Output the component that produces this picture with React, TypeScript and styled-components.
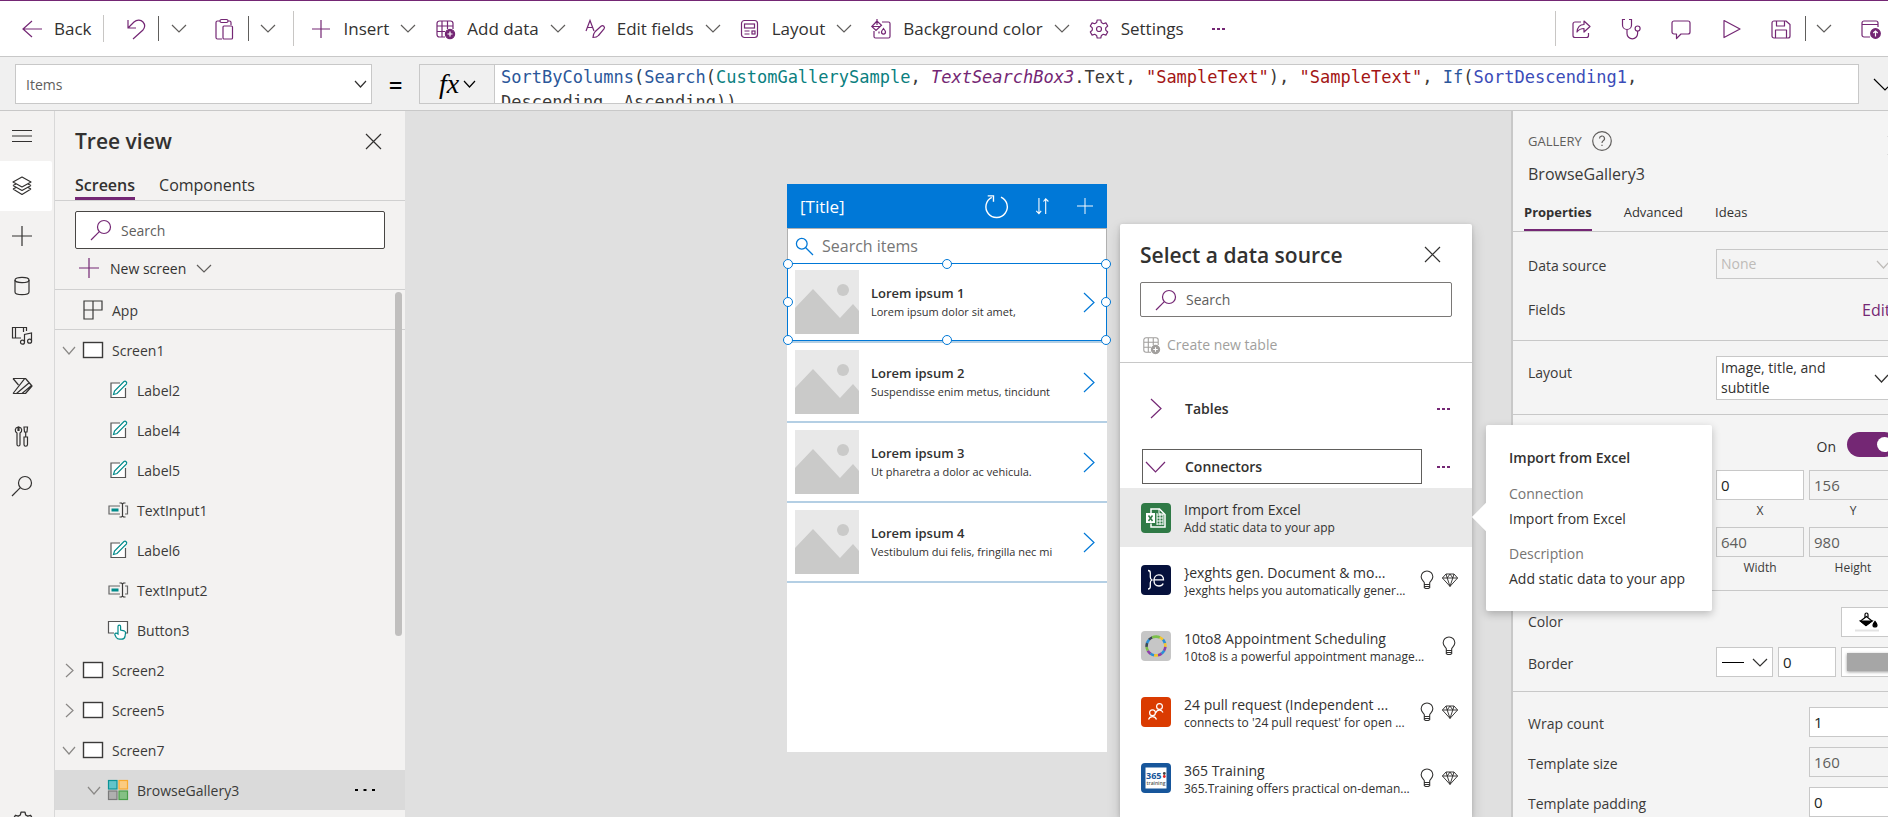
import React from "react";
import styled, { createGlobalStyle, css } from "styled-components";

const purple = "#742774";
const line = "#c8c8c8";
const blue = "#0078d7";

const GlobalStyle = createGlobalStyle`
  *, *::before, *::after { box-sizing: border-box; }
  body {
    margin: 0;
    overflow: hidden;
    font-family: "Open Sans", "Noto Sans", sans-serif;
    font-size: 14px;
    color: #323130;
  }
  button, input, select {
    font: inherit;
    color: inherit;
    margin: 0;
    padding: 0;
    border: 0;
    background: none;
    border-radius: 0;
  }
  h1, h2, h3, p, ul, dl, dd { margin: 0; padding: 0; }
  ul { list-style: none; }
`;

/* ---------- icons ---------- */

const Svg = styled.svg<{ $w?: number; $h?: number }>`
  flex: none;
  display: block;
  width: ${(p) => p.$w ?? 20}px;
  height: ${(p) => p.$h ?? p.$w ?? 20}px;
  fill: none;
  stroke: currentColor;
  stroke-width: 1.2;
  overflow: visible;
`;

type IconProps = { size?: number };

const Chevron = ({ w = 14, h = 7 }: { w?: number; h?: number }) => (
  <Svg $w={w} $h={h} viewBox={`0 0 ${w} ${h}`} aria-hidden>
    <path d={`M0 0 ${w / 2} ${h} ${w} 0`} />
  </Svg>
);
const ChevronRight = ({ w = 7, h = 13 }: { w?: number; h?: number }) => (
  <Svg $w={w} $h={h} viewBox={`0 0 ${w} ${h}`} aria-hidden>
    <path d={`M0 0 ${w} ${h / 2} 0 ${h}`} />
  </Svg>
);
const icon =
  (body: React.ReactNode, base = 20) =>
  ({ size = base }: IconProps) => (
    <Svg $w={size} viewBox="0 0 20 20" aria-hidden>
      {body}
    </Svg>
  );

const BackIcon = icon(<path d="M20 10H1M10 2 1 10l9 8" />);
const UndoIcon = icon(<path d="M2 1v8h8M2 9l6-6c3-2.800 7-2.300 9 0s2 5.500 0 8l-10 9" />);
const PasteIcon = icon(
  <>
    <path d="M8 20H3.500A1.500 1.500 0 0 1 2 18.500v-15A1.500 1.500 0 0 1 3.500 2H6m8 0h1.500A1.500 1.500 0 0 1 17 3.500V6" />
    <rect x="6" y="0.500" width="8" height="3" rx="1.500" />
    <rect x="9" y="7" width="9.500" height="13" rx="1" />
  </>
);
const PlusIcon = icon(<path d="M10 0v20M0 10h20" />);
const InsertIcon = icon(<path d="M9 1v18M0 10h18" />);
const AddDataIcon = icon(
  <>
    <path d="M10 18H4.500A2.500 2.500 0 0 1 2 15.500v-11A2.500 2.500 0 0 1 4.500 2h11A2.500 2.500 0 0 1 18 4.500V10M7 2v16M12.500 2v8M2 7h16M2 12.500h8" />
    <circle cx="15" cy="15" r="4.600" fill="currentColor" />
    <path d="M15 12.500v5M12.500 15h5" stroke="#fff" />
  </>
);
const EditFieldsIcon = icon(
  <>
    <path d="M1 12 5 1.500 9 12M2.500 8.500h5" />
    <path d="M8 18.500c0-3 .8-4.500 2-5.700l6-5.600c2-1.700 4.500.8 3 2.800l-5.500 6.500C12.300 18 10.500 18.500 8 18.500z" />
  </>
);
const LayoutIcon = icon(
  <>
    <rect x="1.500" y="1.500" width="16" height="17" rx="3" />
    <rect x="4.500" y="5" width="10" height="4" />
    <path d="M4.500 12h5M4.500 15h5" />
    <rect x="12" y="12" width="3" height="3" />
  </>
);
const FillIcon = icon(
  <>
    <path d="M11 3h6.500A1.500 1.500 0 0 1 19 4.500v13a1.500 1.500 0 0 1-1.500 1.500h-13A1.500 1.500 0 0 1 3 17.500V12" />
    <path d="M6 2 .8 7.500 5 11.500l5.500-5.300zM1 7.500h8.500M6 6V0" />
    <path d="M12.500 9.500c1.200 1.500 2 2.500 2 3.600a2 2 0 0 1-4 0c0-1.100.8-2.100 2-3.600zM8 12.500v2" />
  </>
);
const GearIcon = icon(
  <>
    <path d="M8.200 1h3.600l.6 2.600 1.900 1.100 2.600-.8 1.800 3.100-2 1.900v2.200l2 1.900-1.800 3.100-2.600-.8-1.900 1.100-.6 2.600H8.200l-.6-2.600-1.900-1.100-2.600.8L1.300 13l2-1.900V8.900l-2-1.900 1.800-3.100 2.600.8 1.900-1.100z" strokeLinejoin="round" />
    <circle cx="10" cy="10" r="2.500" />
  </>
);
const ShareIcon = icon(
  <path
    d="M10 3H4a2 2 0 0 0-2 2v11.500a2 2 0 0 0 2 2h11.500a2 2 0 0 0 2-2V14M6 13c.5-5 3-7.500 7-7.500V2l6 5.500-6 5.500V9.500c-3 0-5 .8-7 3.500z"
    strokeLinejoin="round"
  />
);
const HealthIcon = icon(
  <>
    <path d="M4 .5H1.500V6a4.500 4.500 0 0 0 9 0V.5H8M6 10.500v4a5.300 5.300 0 0 0 10.600 0V12" />
    <circle cx="16.600" cy="9.500" r="2.500" />
  </>
);
const CommentIcon = icon(
  <path d="M3 2h14a2 2 0 0 1 2 2v9a2 2 0 0 1-2 2h-7l-4.500 4.500V15H3a2 2 0 0 1-2-2V4a2 2 0 0 1 2-2z" strokeLinejoin="round" />
);
const PlayIcon = icon(<path d="M3 1.500 19 10 3 18.500z" strokeLinejoin="round" />);
const SaveIcon = icon(
  <path d="M3 2h12l4 3.500V17a2 2 0 0 1-2 2H3a2 2 0 0 1-2-2V4a2 2 0 0 1 2-2zm2.500 0v5h8V2M4.500 19v-8h11v8" strokeLinejoin="round" />
);
const PublishIcon = icon(
  <>
    <path d="M9 18H3a2 2 0 0 1-2-2V4a2 2 0 0 1 2-2h12a2 2 0 0 1 2 2v4M1 5.500h16" />
    <circle cx="14.500" cy="14.500" r="4.800" fill="currentColor" />
    <path d="M14.500 17.500v-5.500M12.300 14l2.200-2 2.200 2" stroke="#fff" />
  </>
);
const MenuIcon = icon(<path d="M0 4.500h20M0 10h20M0 15.500h20" />);
const LayersIcon = icon(
  <path d="M10 1 1 6l9 5 9-5zM1 9.500l9 5 9-5M1 13l9 5.500L19 13M1 9.500 4 8M19 9.500 16 8M1 13l3-1.500M19 13l-3-1.500" strokeLinejoin="round" />
);
const DataIcon = icon(
  <>
    <ellipse cx="10" cy="4" rx="7" ry="2.600" />
    <path d="M3 4v12c0 1.500 3 2.600 7 2.600s7-1.100 7-2.600V4" />
  </>
);
const MediaIcon = icon(
  <>
    <path d="M9 12H.5V1.500h14V5M3.500 2v10M11.500 2v4" />
    <path d="M12.500 16V8.500l7-1.500v8" />
    <circle cx="10.500" cy="16.200" r="2" />
    <circle cx="17.600" cy="15.200" r="2" />
  </>
);
const FlowIcon = icon(
  <path d="M1 2.500h12.500L20 10l-6.500 7.500H9M1 2.500 6.500 9M1 17.500h3.500L17.500 6.500M1 17.500 12.500 2.800M4.500 17.500H10l9.500-8" strokeLinejoin="round" />
);
const ToolsIcon = icon(
  <>
    <path d="M6 1a3.200 3.200 0 0 0-1 6v11.500a1.300 1.300 0 0 0 3 0V7a3.200 3.200 0 0 0-1-6v3.500H6z" />
    <path d="M12 1h3.500l-.5 5h-2.500zM13.700 6v5M12 11h3.500v7.500a1.500 1.500 0 0 1-3.500 0z" />
  </>
);
const SearchIcon = icon(
  <>
    <circle cx="13" cy="7" r="6.500" />
    <path d="M8.300 11.700 0 20" />
  </>
);
const CloseIcon = icon(<path d="M0 0 20 20M20 0 0 20" strokeWidth="1.600" />, 15);
const AppIcon = icon(<path d="M1 1h18v9H1zM10 1v18H1V1M1 10h18" />);
const ScreenIcon = icon(<rect x="0.500" y="2.500" width="19" height="15" fill="#fff" strokeWidth="1.400" />);
const LabelIcon = icon(
  <>
    <path d="M12 3H3v14.500h14.500V8" fill="#fff" stroke="#555" />
    <path d="m5.500 14.500 1-3.500L16 1.500c1.500-1 3.300.8 2.500 2.300L9 13.500z" stroke="#008b8b" fill="#fff" />
  </>
);
const TextInputIcon = icon(
  <>
    <path d="M12 6H1v8h11M17 6h2.500v8H17" stroke="#666" />
    <path d="M3.500 10h7" stroke="#008b8b" strokeWidth="3" />
    <path d="M11.500 3h2l1 1 1-1h2M14.500 4v12M11.500 17h2l1-1 1 1h2" />
  </>
);
const ButtonIcon = icon(
  <>
    <path d="M6 13H.5V1.500h19V13H17" fill="#fff" stroke="#555" />
    <path d="M10 12V6.500a1.300 1.300 0 0 1 2.600 0V10l3.500.8c1.200.4 1.600 1.200 1.400 2.400l-.5 3.300c-.4 1.700-1.600 2.700-3.400 2.700h-2c-1.700 0-2.600-.6-3.500-2l-1.300-2.700c0-1.500 1.700-1.800 3.200-.5z" stroke="#008b8b" fill="#fff" />
  </>
);
const GalleryIcon = icon(
  <>
    <rect x="0.500" y="0.500" width="8.500" height="8.500" fill="#62c4c9" stroke="#0a9396" />
    <rect x="11" y="0.500" width="8.500" height="8.500" fill="#fbcb80" stroke="#f7a92e" />
    <rect x="0.500" y="11" width="8.500" height="8.500" fill="#b0b0b0" stroke="#7a7a7a" />
    <rect x="11" y="11" width="8.500" height="8.500" fill="#84c084" stroke="#4a9e4a" />
  </>
);
const RefreshIcon = icon(<path d="M13 1.800A9.300 9.300 0 1 1 5 2M1.500.8h5v5" />);
const SortIcon = icon(<path d="M5.500 1v17.500M2.500 15.500l3 3 2.500-3M13 19V2M10.500 5 13 2l3 3" />);
const FindIcon = icon(
  <>
    <circle cx="6.800" cy="6.800" r="6.300" strokeWidth="1.500" />
    <path d="M11.500 11.500 20 20" strokeWidth="1.500" />
  </>
);
const BulbIcon = icon(
  <path d="M7 15v-2C6.500 11 3.500 10 3.500 6.500a6.500 6.500 0 0 1 13 0C16.500 10 13.500 11 13 13v2zM7 15v3.500l1.500 1h3l1.500-1V15M7 17.200h6" />
);
const GemIcon = icon(
  <path d="M5 2.500h10l4.500 5L10 18 .5 7.500zM.5 7.500h19M6.500 7.500 10 18l3.500-10.500L10 2.500zM5 2.500l1.500 5M15 2.500l-1.500 5" strokeLinejoin="round" />
);
const HelpIcon = icon(
  <>
    <circle cx="10" cy="10" r="9.300" />
    <path d="M7.500 7.500a2.500 2.500 0 1 1 3.700 2.200c-.9.500-1.200 1-1.200 2.300M10 13.700v1.400" />
  </>
);
const BucketIcon = icon(
  <>
    <path d="M6 6V2.500a1.500 1.500 0 0 1 3 0V5" />
    <path d="M7.500 4.500 1.500 9l5.500 4.500L13 9z" fill="#fff" />
    <path d="M1.500 9H13l-6 4.500z" fill="currentColor" />
    <path d="M16 9.500c1.500 1.800 2 2.500 2 3.500a2 2 0 0 1-4 0c0-1 .5-1.700 2-3.500z" fill="currentColor" />
    <path d="M-4 18.500h24" stroke="#e3e3e3" strokeWidth="2" />
  </>
);

const DotsSvg = styled.svg<{ $w: number }>`
  flex: none;
  display: block;
  width: ${(p) => p.$w}px;
  height: 4px;
  fill: currentColor;
`;
const Dots = ({ w = 13 }: { w?: number }) => (
  <DotsSvg $w={w} viewBox={`0 0 ${w} 4`} aria-hidden>
    <rect x="0" y="1" width="3" height="2" />
    <rect x={(w - 3) / 2} y="1" width="3" height="2" />
    <rect x={w - 3} y="1" width="3" height="2" />
  </DotsSvg>
);

/* ---------- shell ---------- */

const Shell = styled.div`
  display: flex;
  flex-direction: column;
  height: 100vh;
  overflow: hidden;
  border-top: 1px solid ${purple};
`;

const Toolbar = styled.header`
  flex: none;
  display: flex;
  justify-content: space-between;
  height: 56px;
  background: #fff;
  border-bottom: 1px solid ${line};
  overflow: hidden;
`;

const Commands = styled.div`
  display: flex;
  align-items: center;
  padding-left: 22px;
`;

const SideCommands = styled(Commands)`
  flex: none;
  width: 333px;
  padding-left: 0;
  gap: 30px;
`;

const Command = styled.button<{ $after?: number }>`
  flex: none;
  display: flex;
  align-items: center;
  gap: 12px;
  margin-right: ${(p) => p.$after ?? 20}px;
  color: ${purple};
  font-size: 17px;
  line-height: 26px;
`;
const CommandText = styled.span`
  color: #323130;
  white-space: nowrap;
`;
const Grey = styled.span`
  display: flex;
  color: #605e5c;
`;

const Divider = styled.span<{ $h: number; $before?: number; $after?: number; $dark?: boolean }>`
  flex: none;
  width: 1px;
  height: ${(p) => p.$h}px;
  margin: 0 ${(p) => p.$after ?? 0}px 0 ${(p) => p.$before ?? 0}px;
  background: ${(p) => (p.$dark ? "#605e5c" : "#c8c6c4")};
`;

const FormulaBar = styled.div`
  flex: none;
  display: flex;
  height: 54px;
  padding: 7px 0 0 15px;
  background: #f0f0f0;
  border-bottom: 1px solid ${line};
  overflow: hidden;
`;

const SelectWrap = styled.div<{ $w?: string; $h: number; $disabled?: boolean }>`
  position: relative;
  flex: none;
  width: ${(p) => p.$w ?? "auto"};
  height: ${(p) => p.$h}px;
  background: ${(p) => (p.$disabled ? "transparent" : "#fff")};
  border: 1px solid ${line};
  color: ${(p) => (p.$disabled ? "#bebbb8" : "inherit")};
`;
const Select = styled.select`
  appearance: none;
  width: 100%;
  height: 100%;
  opacity: 1;
  outline: none;
`;
const PropertySelect = styled(Select)`
  padding: 0 34px 0 10px;
  font-size: 14px;
  color: #605e5c;
`;
const PanelSelect = styled(Select)`
  padding: 0 24px 0 4px;
  font-size: 14px;
  line-height: 20px;
  white-space: normal;
`;
const SelectArrow = styled.span<{ $right: number }>`
  position: absolute;
  top: 0;
  bottom: 0;
  right: ${(p) => p.$right}px;
  display: flex;
  align-items: center;
  pointer-events: none;
`;

const Equals = styled.span`
  flex: none;
  width: 47px;
  text-align: center;
  font-size: 24px;
  font-weight: 600;
  line-height: 42px;
  color: #000;
`;

const FxButton = styled.button`
  flex: none;
  display: flex;
  align-items: center;
  justify-content: center;
  gap: 5px;
  width: 76px;
  height: 40px;
  border: 1px solid ${line};
  color: #000;
  font-family: "Liberation Serif", serif;
  font-size: 28px;
  font-style: italic;
`;

const Formula = styled.div`
  flex: 1;
  height: 40px;
  padding-left: 6px;
  background: #fff;
  border: 1px solid ${line};
  border-left: 0;
  overflow: hidden;
  font-family: "DejaVu Sans Mono", monospace;
  font-size: 17px;
  line-height: 25px;
  white-space: pre;
  color: #3b3a39;
`;
const Token = styled.span<{ $kind: "fn" | "src" | "ctl" | "str" | "var" }>`
  color: ${(p) => ({ fn: "#2b579a", src: "#0b7f7f", ctl: "#742774", str: "#a31515", var: "#3b4cb8" }[p.$kind])};
  font-style: ${(p) => (p.$kind === "ctl" ? "italic" : "normal")};
`;
const ExpandButton = styled.button`
  flex: none;
  width: 29px;
  padding-left: 15px;
  height: 40px;
  color: #000;
  overflow: hidden;
`;

const Main = styled.main`
  flex: 1;
  display: flex;
  min-height: 0;
`;

/* ---------- rail ---------- */

const Rail = styled.nav`
  flex: none;
  display: flex;
  flex-direction: column;
  width: 55px;
  background: #f3f2f1;
  border-right: 1px solid #d8d8d8;
  overflow: hidden;
`;
const RailButton = styled.button<{ $active?: boolean }>`
  flex: none;
  display: flex;
  align-items: center;
  width: 52px;
  height: 50px;
  padding-left: 12px;
  border-radius: 0 2px 2px 0;
  background: ${(p) => (p.$active ? "#fff" : "transparent")};
`;
const RailFoot = styled.div`
  flex: none;
  height: 6px;
  margin-top: auto;
`;

/* ---------- tree ---------- */

const Tree = styled.aside`
  position: relative;
  flex: none;
  display: flex;
  flex-direction: column;
  width: 350px;
  background: #f3f2f1;
  overflow: hidden;
`;
const TreeHead = styled.div`
  flex: none;
  display: flex;
  align-items: center;
  justify-content: space-between;
  height: 60px;
  padding: 0 24px 0 20px;
`;
const TreeTitle = styled.h1`
  font-size: 21px;
  font-weight: 600;
  line-height: 28px;
`;
const TreeTabs = styled.div`
  flex: none;
  display: flex;
  gap: 24px;
  height: 30px;
  padding-left: 20px;
  border-bottom: 1px solid #d0d0d0;
`;
const TreeTab = styled.button<{ $active?: boolean }>`
  display: flex;
  font-size: 16px;
  line-height: 28px;
  font-weight: ${(p) => (p.$active ? 600 : 400)};
  border-bottom: 3px solid ${(p) => (p.$active ? purple : "transparent")};
`;
const SearchField = styled.label<{ $h: number; $border: string }>`
  flex: none;
  display: flex;
  align-items: center;
  gap: 10px;
  height: ${(p) => p.$h}px;
  padding-left: 15px;
  background: #fff;
  border: 1px solid ${(p) => p.$border};
  border-radius: 2px;
  color: ${purple};
`;
const SearchInput = styled.input`
  flex: 1;
  min-width: 0;
  height: 100%;
  outline: none;
  font-size: 14px;
  color: #323130;
  &::placeholder { color: #605e5c; opacity: 1; }
`;
const TreeSearch = styled.div`
  flex: none;
  padding: 10px 20px 0;
`;
const NewScreen = styled.button`
  flex: none;
  display: flex;
  align-items: center;
  gap: 11px;
  height: 41px;
  padding: 0 0 2px 24px;
  border-bottom: 1px solid #d0d0d0;
`;
const Purple = styled.span`
  display: flex;
  color: ${purple};
`;
const TreeList = styled.ul`
  flex: none;
`;
const TreeItem = styled.li<{ $selected?: boolean; $ruled?: boolean }>`
  display: flex;
  align-items: center;
  height: 40px;
  padding-right: 30px;
  background: ${(p) => (p.$selected ? "#dadada" : "transparent")};
  border-bottom: ${(p) => (p.$ruled ? "1px solid #d0d0d0" : "0")};
`;
const TreeTwisty = styled.span<{ $depth: number }>`
  flex: none;
  display: flex;
  justify-content: center;
  width: ${(p) => 28 + p.$depth * 25}px;
  padding-left: ${(p) => p.$depth * 25}px;
  color: #8a8886;
`;
const TreeButton = styled.button`
  flex: 1;
  display: flex;
  align-items: center;
  gap: 9px;
  color: #3b3a39;
  line-height: 20px;
`;
const TreeName = styled.span`
  padding-top: 2px;
`;
const TreeScroll = styled.span`
  position: absolute;
  top: 181px;
  right: 3px;
  width: 7px;
  height: 344px;
  border-radius: 4px;
  background: #c0bfbe;
`;

/* ---------- canvas ---------- */

const Canvas = styled.section`
  position: relative;
  z-index: 1;
  flex: 1;
  min-width: 0;
  display: flex;
  justify-content: center;
  align-items: flex-start;
  padding: 73px 22px 0 0;
  background: #e0e0e0;
`;
const Phone = styled.div`
  display: flex;
  flex-direction: column;
  width: 320px;
  min-height: 568px;
  background: #fff;
`;
const PhoneHead = styled.div`
  display: flex;
  align-items: center;
  justify-content: space-between;
  height: 44px;
  padding: 0 14px 0 13px;
  background: ${blue};
  color: #fff;
`;
const PhoneTitle = styled.h2`
  font-size: 17px;
  font-weight: 400;
`;
const PhoneActions = styled.div`
  display: flex;
  align-items: center;
  gap: 25px;
`;
const BareButton = styled.button`
  display: flex;
  align-items: center;
`;
const PhoneSearch = styled.label`
  display: flex;
  align-items: center;
  gap: 9px;
  height: 35px;
  padding-left: 8px;
  border: solid #b0b0b0;
  border-width: 1px 1px 0;
  color: ${blue};
`;
const PhoneSearchInput = styled(SearchInput)`
  font-size: 16px;
  &::placeholder { color: #767676; }
`;
const Card = styled.li`
  position: relative;
  display: flex;
  align-items: center;
  height: 80px;
  padding: 0 13px 0 8px;
  border-bottom: 2px solid #b4cfe4;
`;
const CardText = styled.div`
  flex: 1;
  padding-left: 12px;
`;
const CardTitle = styled.h3`
  font-size: 13px;
  font-weight: 600;
  line-height: 19px;
`;
const CardSub = styled.p`
  font-size: 11px;
  line-height: 18px;
  white-space: nowrap;
`;
const Accent = styled.span`
  display: flex;
  color: ${blue};
`;
const Picture = styled.svg`
  flex: none;
  display: block;
  width: 64px;
  height: 64px;
`;
const Selection = styled.div`
  position: absolute;
  inset: 0;
  border: 1px solid ${blue};
`;
const Handle = styled.span<{ $x: number; $y: number }>`
  position: absolute;
  left: ${(p) => p.$x}%;
  top: ${(p) => p.$y}%;
  width: 10px;
  height: 10px;
  margin: -5px;
  border: 1px solid ${blue};
  border-radius: 50%;
  background: #fff;
`;

/* ---------- data source flyout ---------- */

const Flyout = styled.section`
  position: absolute;
  top: 113px;
  right: 39px;
  bottom: 0;
  display: flex;
  flex-direction: column;
  width: 352px;
  background: #fff;
  border-radius: 2px 2px 0 0;
  box-shadow: 0 6px 14px rgba(0, 0, 0, 0.18), 0 1px 4px rgba(0, 0, 0, 0.14);
`;
const FlyoutHead = styled.div`
  flex: none;
  display: flex;
  align-items: center;
  justify-content: space-between;
  height: 58px;
  padding: 3px 32px 0 20px;
`;
const FlyoutTitle = styled.h2`
  font-size: 21px;
  font-weight: 600;
  line-height: 28px;
`;
const FlyoutSearch = styled.div`
  flex: none;
  padding: 0 20px;
`;
const CreateTable = styled.button`
  flex: none;
  display: flex;
  align-items: center;
  gap: 7px;
  height: 46px;
  padding: 10px 0 0 22px;
  border-bottom: 1px solid ${line};
  color: #a19f9d;
`;
const Groups = styled.div`
  flex: none;
  padding: 28px 22px 4px 22px;
`;
const Group = styled.div`
  display: flex;
  align-items: center;
  justify-content: space-between;
  height: 35px;
  color: ${purple};
  & + & { margin-top: 23px; }
`;
const GroupButton = styled.button<{ $focused?: boolean }>`
  display: flex;
  align-items: center;
  width: 280px;
  height: 35px;
  border: 1px solid ${(p) => (p.$focused ? "#605e5c" : "transparent")};
`;
const GroupChevron = styled.span`
  display: flex;
  justify-content: center;
  width: 25px;
  margin-right: 17px;
`;
const GroupName = styled.span`
  font-size: 14px;
  font-weight: 600;
  color: #323130;
`;
const Connectors = styled.ul`
  flex: 1;
  min-height: 0;
  overflow: hidden;
`;
const Connector = styled.li<{ $hover?: boolean }>`
  display: flex;
  align-items: center;
  height: ${(p) => (p.$hover ? 59 : 66)}px;
  padding: 0 14px 0 21px;
  background: ${(p) => (p.$hover ? "#e9e9e9" : "transparent")};
`;
const Logo = styled.svg`
  flex: none;
  display: block;
  width: 30px;
  height: 30px;
`;
const ConnectorText = styled.button`
  flex: 1;
  min-width: 0;
  padding: 2px 0 0 13px;
  text-align: left;
  white-space: nowrap;
`;
const ConnectorName = styled.span`
  display: block;
  font-size: 14px;
  line-height: 18px;
`;
const ConnectorSub = styled.span`
  display: block;
  font-size: 12px;
  line-height: 17px;
`;
const Badges = styled.span`
  flex: none;
  display: flex;
  align-items: center;
  gap: 6px;
`;

const Callout = styled.div`
  position: absolute;
  top: 201px;
  left: calc(100% + 14px);
  width: 226px;
  padding: 22px 0 20px 23px;
  background: #fff;
  border-radius: 2px;
  box-shadow: 0 3px 8px rgba(0, 0, 0, 0.24);
  white-space: nowrap;
  &::before {
    content: "";
    position: absolute;
    left: -10px;
    top: 82px;
    width: 20px;
    height: 20px;
    background: #fff;
    transform: rotate(45deg);
  }
`;
const CalloutTitle = styled.h3`
  font-size: 14px;
  font-weight: 600;
  line-height: 22px;
  margin-bottom: 12px;
`;
const CalloutTerm = styled.dt`
  font-size: 14px;
  line-height: 25px;
  color: #767472;
`;
const CalloutValue = styled.dd`
  font-size: 14px;
  line-height: 25px;
  &:not(:last-child) { margin-bottom: 10px; }
`;

/* ---------- properties ---------- */

const Properties = styled.aside`
  flex: none;
  width: 377px;
  background: #f4f4f4;
  border-left: 2px solid ${line};
  overflow: hidden;
`;
const PropertiesBody = styled.div`
  width: 399px;
`;
const PanelHead = styled.div`
  display: flex;
  justify-content: space-between;
  height: 85px;
  padding: 19px 13px 0 15px;
  color: #605e5c;
`;
const PanelKind = styled.div`
  display: flex;
  align-items: center;
  gap: 10px;
  height: 21px;
  font-size: 13px;
`;
const PanelName = styled.h2`
  margin-top: 10px;
  font-size: 16px;
  font-weight: 400;
  line-height: 26px;
  color: #3b3a39;
`;
const PanelTabs = styled.div`
  display: flex;
  gap: 32px;
  height: 36px;
  padding-left: 11px;
  border-bottom: 1px solid ${line};
`;
const PanelTab = styled.button<{ $active?: boolean }>`
  display: flex;
  font-size: 13px;
  line-height: 32px;
  font-weight: ${(p) => (p.$active ? 700 : 400)};
  border-bottom: 2px solid ${(p) => (p.$active ? purple : "transparent")};
`;
const Section = styled.div<{ $pad: string }>`
  display: flex;
  flex-direction: column;
  padding: ${(p) => p.$pad};
  border-bottom: 1px solid ${line};
`;
const Row = styled.div<{ $h?: number; $top?: boolean }>`
  display: flex;
  justify-content: flex-end;
  align-items: ${(p) => (p.$top ? "flex-start" : "center")};
  min-height: ${(p) => p.$h ?? 40}px;
  & > label { padding-top: ${(p) => (p.$top ? 7 : 3)}px; }
`;
const Name = styled.label`
  flex: 1;
  font-size: 14px;
  line-height: 20px;
  color: #3b3a39;
`;
const EditLink = styled.a`
  width: 35px;
  font-size: 16px;
  color: ${purple};
  text-decoration: none;
`;
const Fields = styled.div`
  display: flex;
  justify-content: flex-end;
  gap: 5px;
  & + & { margin-top: 5px; }
`;
const Field = styled.div`
  display: flex;
  flex-direction: column;
  width: 88px;
`;
const FieldName = styled.label`
  text-align: center;
  font-size: 12px;
  line-height: 22px;
  color: #3b3a39;
`;
const NumberInput = styled.input<{ $w?: number }>`
  width: ${(p) => p.$w ?? 88}px;
  height: 30px;
  padding-left: 4px;
  font-size: 15px;
  background: ${(p) => (p.readOnly ? "transparent" : "#fff")};
  color: ${(p) => (p.readOnly ? "#605e5c" : "#201f1e")};
  border: 1px solid ${line};
`;
const Toggle = styled.input`
  appearance: none;
  position: relative;
  width: 50px;
  height: 25px;
  margin-left: 11px;
  border-radius: 13px;
  background: ${purple};
  &::after {
    content: "";
    position: absolute;
    top: 5px;
    right: 5px;
    width: 15px;
    height: 15px;
    border-radius: 50%;
    background: #fff;
  }
`;
const swatchBox = css`
  width: 56px;
  height: 30px;
  border: 1px solid ${line};
  background: #fff;
`;
const ColorButton = styled.button`
  ${swatchBox}
  display: flex;
  align-items: center;
  justify-content: center;
  color: #000;
`;
const BorderSwatch = styled.button`
  ${swatchBox}
  padding: 5px;
  &::before {
    content: "";
    display: block;
    height: 18px;
    background: #a6a6a6;
    box-shadow: 0 1px 3px rgba(0, 0, 0, 0.4);
  }
`;
const LineSample = styled.span`
  position: absolute;
  left: 5px;
  top: 14px;
  width: 22px;
  height: 1px;
  background: #000;
  pointer-events: none;
`;
const BareCommand = styled(BareButton)`
  flex: none;
  color: ${purple};
`;
const RailGear = styled(BareButton)`
  padding-left: 12px;
`;
const MoreButton = styled(BareButton)`
  color: #000;
`;
const PanelCollapse = styled(BareButton)`
  height: 30px;
`;

/* ---------- data ---------- */

type Node = {
  name: string;
  depth: number;
  Icon: React.FC<IconProps>;
  open?: boolean;
  ruled?: boolean;
  selected?: boolean;
};

const nodes: Node[] = [
  { name: "App", depth: 0, Icon: AppIcon, ruled: true },
  { name: "Screen1", depth: 0, Icon: ScreenIcon, open: true },
  { name: "Label2", depth: 1, Icon: LabelIcon },
  { name: "Label4", depth: 1, Icon: LabelIcon },
  { name: "Label5", depth: 1, Icon: LabelIcon },
  { name: "TextInput1", depth: 1, Icon: TextInputIcon },
  { name: "Label6", depth: 1, Icon: LabelIcon },
  { name: "TextInput2", depth: 1, Icon: TextInputIcon },
  { name: "Button3", depth: 1, Icon: ButtonIcon },
  { name: "Screen2", depth: 0, Icon: ScreenIcon, open: false },
  { name: "Screen5", depth: 0, Icon: ScreenIcon, open: false },
  { name: "Screen7", depth: 0, Icon: ScreenIcon, open: true },
  { name: "BrowseGallery3", depth: 1, Icon: GalleryIcon, open: true, selected: true },
];

const rail: { name: string; Icon: React.FC<IconProps> }[] = [
  { name: "Tree view", Icon: LayersIcon },
  { name: "Insert", Icon: PlusIcon },
  { name: "Data", Icon: DataIcon },
  { name: "Media", Icon: MediaIcon },
  { name: "Power Automate", Icon: FlowIcon },
  { name: "Advanced tools", Icon: ToolsIcon },
  { name: "Search", Icon: SearchIcon },
];

const commands: { name: string; Icon: React.FC<IconProps> }[] = [
  { name: "Insert", Icon: InsertIcon },
  { name: "Add data", Icon: AddDataIcon },
  { name: "Edit fields", Icon: EditFieldsIcon },
  { name: "Layout", Icon: LayoutIcon },
  { name: "Background color", Icon: FillIcon },
];

const cards = [
  ["Lorem ipsum 1", "Lorem ipsum dolor sit amet,"],
  ["Lorem ipsum 2", "Suspendisse enim metus, tincidunt"],
  ["Lorem ipsum 3", "Ut pharetra a dolor ac vehicula."],
  ["Lorem ipsum 4", "Vestibulum dui felis, fringilla nec mi"],
];

const ring = ["#7cc04b", "#f2c530", "#2b8fd6", "#f2c530", "#8e3fa8", "#2b8fd6", "#8e3fa8", "#f2c530", "#2b8fd6", "#8e3fa8", "#7cc04b", "#3c4a55", "#2b8fd6", "#3c4a55", "#7cc04b"];

const ExcelLogo = (
  <>
    <rect width="30" height="30" rx="4" fill="#2f7a46" />
    <path d="M10 10V6h8.500l5.500 5.500V24H10v-3.500" fill="none" stroke="#fff" strokeWidth="1.500" />
    <path d="M16 12h6M16 15h6M16 18h6M16 21h6M16 10v12M19 10v12M22 11v11M18 6v5h5" fill="none" stroke="#fff" />
    <rect x="5" y="10" width="9" height="10" fill="#fff" />
    <path d="m7.500 12.500 4 5.500M11.500 12.500l-4 5.500" stroke="#2f7a46" strokeWidth="1.500" />
  </>
);
const ExghtsLogo = (
  <>
    <rect width="30" height="30" rx="4" fill="#06113c" />
    <path d="M7 5.500c2 0 2.300 1 2.300 2.500v4c0 1.800.4 2.600 1.700 3-1.300.4-1.700 1.200-1.700 3v3.500c0 1.500-.3 2.500-2.300 2.500M13 14.800h9.500c0-3-2-5-4.700-5S13 12.200 13 15.500s2 5.500 5 5.500c2 0 3.500-.8 4.200-2.500" fill="none" stroke="#fff" strokeWidth="1.300" />
  </>
);
const TenTo8Logo = (
  <>
    <rect width="30" height="30" rx="4" fill="#c6c6c6" />
    {ring.map((color, i) => (
      <path key={i} d="M15 5.600a9.400 9.400 0 0 1 4 .9" fill="none" stroke={color} strokeWidth="2.600" transform={`rotate(${i * 24} 15 15)`} />
    ))}
  </>
);
const PullLogo = (
  <>
    <rect width="30" height="30" rx="4" fill="#da3b01" />
    <g fill="none" stroke="#fff" strokeWidth="1.200">
      <circle cx="18.500" cy="9.500" r="2.900" />
      <path d="M14.700 16a3.900 3.900 0 0 1 7.300-.5" />
      <circle cx="11.500" cy="15.700" r="2.900" />
      <path d="M7.500 22.500a4.200 4.200 0 0 1 8 0" />
    </g>
  </>
);
const TrainingLogo = (
  <>
    <rect width="30" height="30" rx="4" fill="#17569b" />
    <rect x="4.500" y="4.500" width="21" height="21" fill="#fff" />
    <text x="5" y="16" fontSize="9" fontWeight="700" fill="#17569b" stroke="none">365</text>
    <circle cx="23.300" cy="10.500" r="1.400" fill="#444" />
    <circle cx="23.300" cy="13.500" r="1.400" fill="#d22" />
    <text x="5.500" y="21.500" fontSize="5" fontWeight="600" fill="#555" stroke="none">training</text>
  </>
);

const connectors: { logo: React.ReactNode; name: string; sub: string; bulb?: boolean; gem?: boolean; hover?: boolean }[] = [
  { logo: ExcelLogo, name: "Import from Excel", sub: "Add static data to your app", hover: true },
  { logo: ExghtsLogo, name: "}exghts gen. Document & mo...", sub: "}exghts helps you automatically gener...", bulb: true, gem: true },
  { logo: TenTo8Logo, name: "10to8 Appointment Scheduling", sub: "10to8 is a powerful appointment manage...", bulb: true },
  { logo: PullLogo, name: "24 pull request (Independent ...", sub: "connects to '24 pull request' for open ...", bulb: true, gem: true },
  { logo: TrainingLogo, name: "365 Training", sub: "365.Training offers practical on-deman...", bulb: true, gem: true },
];

const handles = [[0, 0], [50, 0], [100, 0], [0, 50], [100, 50], [0, 100], [50, 100], [100, 100]];

/* ---------- page ---------- */

export default function App() {
  return (
    <>
      <GlobalStyle />
      <Shell>
        <Toolbar>
          <Commands>
            <Command $after={11}><BackIcon /><CommandText>Back</CommandText></Command>
            <Divider $h={27} $after={22} />
            <Command $after={12} aria-label="Undo"><UndoIcon /></Command>
            <Divider $h={25} $dark $after={13} />
            <Command $after={28} aria-label="Undo options"><Grey><Chevron /></Grey></Command>
            <Command $after={14} aria-label="Paste"><PasteIcon /></Command>
            <Divider $h={25} $dark $after={12} />
            <Command $after={18} aria-label="Paste options"><Grey><Chevron /></Grey></Command>
            <Divider $h={35} $after={18} />
            {commands.map(({ name, Icon }) => (
              <Command key={name}><Icon /><CommandText>{name}</CommandText><Grey><Chevron /></Grey></Command>
            ))}
            <Command $after={28}><GearIcon /><CommandText>Settings</CommandText></Command>
            <Command aria-label="More commands"><Dots /></Command>
          </Commands>
          <SideCommands>
            <Divider $h={35} $after={-15} />
            <BareCommand aria-label="Share"><ShareIcon /></BareCommand>
            <BareCommand aria-label="App checker"><HealthIcon /></BareCommand>
            <BareCommand aria-label="Comments"><CommentIcon /></BareCommand>
            <BareCommand aria-label="Preview"><PlayIcon /></BareCommand>
            <BareCommand aria-label="Save"><SaveIcon /></BareCommand>
            <Divider $h={25} $dark $before={-16} $after={-19} />
            <BareCommand aria-label="Save options"><Grey><Chevron /></Grey></BareCommand>
            <BareCommand aria-label="Publish"><PublishIcon /></BareCommand>
          </SideCommands>
        </Toolbar>

        <FormulaBar>
          <SelectWrap $w="357px" $h={40}>
            <PropertySelect aria-label="Property"><option>Items</option></PropertySelect>
            <SelectArrow $right={5}><Chevron w={11} h={6} /></SelectArrow>
          </SelectWrap>
          <Equals>=</Equals>
          <FxButton aria-label="Function"><span>fx</span><Chevron w={11} h={6} /></FxButton>
          <Formula role="textbox" aria-label="Formula">
            <Token $kind="fn">SortByColumns</Token>(<Token $kind="fn">Search</Token>(
            <Token $kind="src">CustomGallerySample</Token>, <Token $kind="ctl">TextSearchBox3</Token>.Text,{" "}
            <Token $kind="str">"SampleText"</Token>), <Token $kind="str">"SampleText"</Token>,{" "}
            <Token $kind="fn">If</Token>(<Token $kind="var">SortDescending1</Token>,{"\n"}Descending, Ascending))
          </Formula>
          <ExpandButton aria-label="Expand formula bar"><Chevron w={22} h={11} /></ExpandButton>
        </FormulaBar>

        <Main>
          <Rail aria-label="Authoring">
            <RailButton aria-label="Menu"><MenuIcon /></RailButton>
            {rail.map(({ name, Icon }, i) => (
              <RailButton key={name} $active={i === 0} aria-label={name}><Icon /></RailButton>
            ))}
            <RailFoot>
              <RailGear aria-label="Settings"><GearIcon size={22} /></RailGear>
            </RailFoot>
          </Rail>

          <Tree>
            <TreeHead>
              <TreeTitle>Tree view</TreeTitle>
              <BareButton aria-label="Close tree view"><CloseIcon /></BareButton>
            </TreeHead>
            <TreeTabs>
              <TreeTab $active>Screens</TreeTab>
              <TreeTab>Components</TreeTab>
            </TreeTabs>
            <TreeSearch>
              <SearchField $h={38} $border="#484644">
                <SearchIcon />
                <SearchInput placeholder="Search" aria-label="Search screens" />
              </SearchField>
            </TreeSearch>
            <NewScreen>
              <Purple><PlusIcon /></Purple>New screen<Grey><Chevron /></Grey>
            </NewScreen>
            <TreeList>
              {nodes.map(({ name, depth, Icon, open, ruled, selected }) => (
                <TreeItem key={name} $ruled={ruled} $selected={selected}>
                  <TreeTwisty $depth={depth}>
                    {open === true && <Chevron w={12} h={7} />}
                    {open === false && <ChevronRight />}
                  </TreeTwisty>
                  <TreeButton><Icon /><TreeName>{name}</TreeName></TreeButton>
                  {selected && <MoreButton aria-label="More"><Dots w={20} /></MoreButton>}
                </TreeItem>
              ))}
            </TreeList>
            <TreeScroll />
          </Tree>

          <Canvas>
            <Phone>
              <PhoneHead>
                <PhoneTitle>[Title]</PhoneTitle>
                <PhoneActions>
                  <BareButton aria-label="Refresh"><RefreshIcon size={23} /></BareButton>
                  <BareButton aria-label="Sort"><SortIcon size={18} /></BareButton>
                  <BareButton aria-label="New"><PlusIcon size={16} /></BareButton>
                </PhoneActions>
              </PhoneHead>
              <PhoneSearch>
                <FindIcon size={17} />
                <PhoneSearchInput placeholder="Search items" aria-label="Search items" />
              </PhoneSearch>
              <ul>
                {cards.map(([title, sub], i) => (
                  <Card key={title}>
                    <Picture viewBox="0 0 64 64" aria-hidden>
                      <rect width="64" height="64" fill="#e8e8e8" />
                      <path d="M0 38 18 19l27 29 13-14 6 7v23H0z" fill="#cacac9" />
                      <circle cx="48" cy="20" r="6" fill="#cacac9" />
                    </Picture>
                    <CardText>
                      <CardTitle>{title}</CardTitle>
                      <CardSub>{sub}</CardSub>
                    </CardText>
                    <Accent><ChevronRight w={10} h={19} /></Accent>
                    {i === 0 && (
                      <Selection>
                        {handles.map(([x, y]) => <Handle key={`${x}-${y}`} $x={x} $y={y} />)}
                      </Selection>
                    )}
                  </Card>
                ))}
              </ul>
            </Phone>

            <Flyout>
              <FlyoutHead>
                <FlyoutTitle>Select a data source</FlyoutTitle>
                <BareButton aria-label="Close"><CloseIcon /></BareButton>
              </FlyoutHead>
              <FlyoutSearch>
                <SearchField $h={35} $border="#7a7876">
                  <SearchIcon />
                  <SearchInput placeholder="Search" aria-label="Search data sources" />
                </SearchField>
              </FlyoutSearch>
              <CreateTable><AddDataIcon size={18} />Create new table</CreateTable>
              <Groups>
                <Group>
                  <GroupButton>
                    <GroupChevron><ChevronRight w={10} h={19} /></GroupChevron>
                    <GroupName>Tables</GroupName>
                  </GroupButton>
                  <BareButton aria-label="Tables options"><Dots /></BareButton>
                </Group>
                <Group>
                  <GroupButton $focused>
                    <GroupChevron><Chevron w={19} h={10} /></GroupChevron>
                    <GroupName>Connectors</GroupName>
                  </GroupButton>
                  <BareButton aria-label="Connectors options"><Dots /></BareButton>
                </Group>
              </Groups>
              <Connectors>
                {connectors.map((c) => (
                  <Connector key={c.name} $hover={c.hover}>
                    <Logo viewBox="0 0 30 30" aria-hidden>{c.logo}</Logo>
                    <ConnectorText>
                      <ConnectorName>{c.name}</ConnectorName>
                      <ConnectorSub>{c.sub}</ConnectorSub>
                    </ConnectorText>
                    <Badges>
                      {c.bulb && <BulbIcon size={18} />}
                      {c.gem && <GemIcon size={16} />}
                    </Badges>
                  </Connector>
                ))}
              </Connectors>
              <Callout role="tooltip">
                <CalloutTitle>Import from Excel</CalloutTitle>
                <dl>
                  <CalloutTerm>Connection</CalloutTerm>
                  <CalloutValue>Import from Excel</CalloutValue>
                  <CalloutTerm>Description</CalloutTerm>
                  <CalloutValue>Add static data to your app</CalloutValue>
                </dl>
              </Callout>
            </Flyout>
          </Canvas>

          <Properties>
            <PropertiesBody>
              <PanelHead>
                <div>
                  <PanelKind>GALLERY<HelpIcon /></PanelKind>
                  <PanelName>BrowseGallery3</PanelName>
                </div>
                <PanelCollapse aria-label="Collapse"><ChevronRight w={11} h={19} /></PanelCollapse>
              </PanelHead>
              <PanelTabs>
                <PanelTab $active>Properties</PanelTab>
                <PanelTab>Advanced</PanelTab>
                <PanelTab>Ideas</PanelTab>
              </PanelTabs>
              <Section $pad="9px 15px 7px">
                <Row $h={46}>
                  <Name htmlFor="data-source">Data source</Name>
                  <SelectWrap $w="181px" $h={30} $disabled>
                    <PanelSelect id="data-source" disabled><option>None</option></PanelSelect>
                    <SelectArrow $right={6}><Chevron w={13} h={7} /></SelectArrow>
                  </SelectWrap>
                </Row>
                <Row $h={46}>
                  <Name as="span">Fields</Name>
                  <EditLink href="#fields">Edit</EditLink>
                </Row>
              </Section>
              <Section $pad="15px 15px 14px">
                <Row $h={44} $top>
                  <Name htmlFor="layout">Layout</Name>
                  <SelectWrap $w="181px" $h={44}>
                    <PanelSelect id="layout"><option>Image, title, and subtitle</option></PanelSelect>
                    <SelectArrow $right={8}><Chevron w={13} h={7} /></SelectArrow>
                  </SelectWrap>
                </Row>
              </Section>
              <Section $pad="4px 15px 11px">
                <Row $h={51}>
                  <label htmlFor="visible">On</label>
                  <Toggle id="visible" type="checkbox" defaultChecked />
                </Row>
                <Fields>
                  <Field><NumberInput id="pos-x" defaultValue="0" /><FieldName htmlFor="pos-x">X</FieldName></Field>
                  <Field><NumberInput id="pos-y" defaultValue="156" readOnly /><FieldName htmlFor="pos-y">Y</FieldName></Field>
                </Fields>
                <Fields>
                  <Field><NumberInput id="width" defaultValue="640" readOnly /><FieldName htmlFor="width">Width</FieldName></Field>
                  <Field><NumberInput id="height" defaultValue="980" readOnly /><FieldName htmlFor="height">Height</FieldName></Field>
                </Fields>
              </Section>
              <Section $pad="11px 15px 9px">
                <Row><Name as="span">Color</Name><ColorButton aria-label="Color"><BucketIcon size={20} /></ColorButton></Row>
                <Row>
                  <Name htmlFor="border">Border</Name>
                  <Fields>
                    <SelectWrap $w="57px" $h={30}>
                      <LineSample />
                      <Select aria-label="Border style"><option aria-label="Solid" /></Select>
                      <SelectArrow $right={5}><Chevron w={14} h={7} /></SelectArrow>
                    </SelectWrap>
                    <NumberInput id="border" $w={58} defaultValue="0" />
                    <BorderSwatch aria-label="Border color" />
                  </Fields>
                </Row>
              </Section>
              <Section $pad="10px 15px 0">
                <Row><Name htmlFor="wrap">Wrap count</Name><NumberInput id="wrap" defaultValue="1" /></Row>
                <Row><Name htmlFor="tsize">Template size</Name><NumberInput id="tsize" defaultValue="160" readOnly /></Row>
                <Row><Name htmlFor="tpad">Template padding</Name><NumberInput id="tpad" defaultValue="0" /></Row>
              </Section>
            </PropertiesBody>
          </Properties>
        </Main>
      </Shell>
    </>
  );
}
